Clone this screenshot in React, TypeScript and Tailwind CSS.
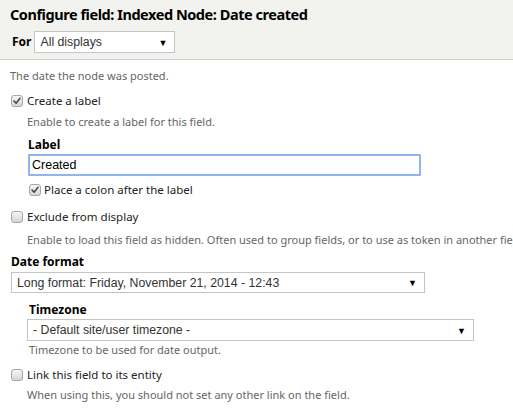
import React from "react";

function Check({ checked = false }: { checked?: boolean }) {
  return (
    <span className="relative inline-flex h-[12px] w-[12px] shrink-0 items-center justify-center rounded-[3px] border border-[#a6a6a6] bg-gradient-to-b from-[#f6f6f6] to-[#d6d6d6]">
      {checked && (
        <svg viewBox="0 0 12 12" className="h-[10px] w-[10px]">
          <path d="M2.5 6.2 L5 8.6 L9.6 2.8" fill="none" stroke="#4a4a4a" strokeWidth="1.9" strokeLinecap="round" strokeLinejoin="round" />
        </svg>
      )}
    </span>
  );
}

function Select({ value, width, height = 22 }: { value: string; width: string; height?: number }) {
  return (
    <div
      className={`flex items-center justify-between border border-[#c4c4c4] bg-white pl-[5px] pr-[7px] text-[12.3px] text-[#333] ${width}`}
      style={{ height }}
    >
      <span className="font-['Liberation_Sans',Arial,sans-serif]">{value}</span>
      <span className="text-[9px] leading-none text-black">▼</span>
    </div>
  );
}

export default function App() {
  return (
    <div className="h-[414px] w-[513px] overflow-hidden bg-white font-['Noto_Sans',Verdana,sans-serif]">
      {/* Header */}
      <div className="h-[60px] border-b border-[#cfcfcf] bg-[#f2f2ee] px-[10px] pt-[4px]">
        <div className="h-[20px] text-[14.5px] font-bold leading-[20px] tracking-[-0.45px] text-black">
          Configure field: Indexed Node: Date created
        </div>
        <div className="mt-[7px] flex items-center gap-[3px] pl-[2px]">
          <span className="text-[12px] font-bold text-black">For</span>
          <Select value="All displays" width="w-[141px]" />
        </div>
      </div>

      {/* Body */}
      <div className="whitespace-nowrap px-[10px] text-[11px] leading-[16px]">
        <div className="mt-[8px] h-[16px] text-[#666]">The date the node was posted.</div>

        <div className="mt-[9px] flex h-[16px] items-center gap-[4px] pl-[1px] text-[11.5px] text-[#222]">
          <Check checked />
          <span>Create a label</span>
        </div>
        <div className="mt-[5px] h-[16px] pl-[17px] text-[#666]">Enable to create a label for this field.</div>

        <div className="pl-[18px]">
          <div className="mt-[7px] h-[16px] text-[12px] font-bold text-black">Label</div>
          <div className="mt-[1px] flex h-[22px] w-[393px] items-center rounded-[1px] border-2 border-[#90b4f0] bg-white pl-[2px] font-['Liberation_Sans',Arial,sans-serif] text-[12.5px] text-black">
            Created
          </div>
          <div className="mt-[6px] flex h-[16px] items-center gap-[3px] pl-[1px] text-[11.5px] text-[#222]">
            <Check checked />
            <span>Place a colon after the label</span>
          </div>
        </div>

        <div className="mt-[11px] flex h-[16px] items-center gap-[4px] pl-[1px] text-[11.5px] text-[#222]">
          <Check />
          <span>Exclude from display</span>
        </div>
        <div className="mt-[7px] h-[16px] pl-[17px] text-[#666]">
          Enable to load this field as hidden. Often used to group fields, or to use as token in another field.
        </div>

        <div className="mt-[6px] h-[16px] pl-[1px] text-[12px] font-bold text-black">Date format</div>
        <div className="mt-[2px] pl-[1px]">
          <Select value="Long format: Friday, November 21, 2014 - 12:43" width="w-[414px]" height={21} />
        </div>

        <div className="pl-[17px]">
          <div className="mt-[9px] h-[16px] pl-[2px] text-[12px] font-bold text-black">Timezone</div>
          <div className="mt-[1px]">
            <Select value="- Default site/user timezone -" width="w-[447px]" />
          </div>
          <div className="mt-[2px] h-[14px] pl-[2px] leading-[14px] text-[#666]">Timezone to be used for date output.</div>
        </div>

        <div className="mt-[10px] flex h-[16px] items-center gap-[4px] pl-[1px] text-[11.5px] text-[#222]">
          <Check />
          <span>Link this field to its entity</span>
        </div>
        <div className="mt-[4px] h-[16px] pl-[17px] text-[#666]">
          When using this, you should not set any other link on the field.
        </div>
      </div>
    </div>
  );
}
